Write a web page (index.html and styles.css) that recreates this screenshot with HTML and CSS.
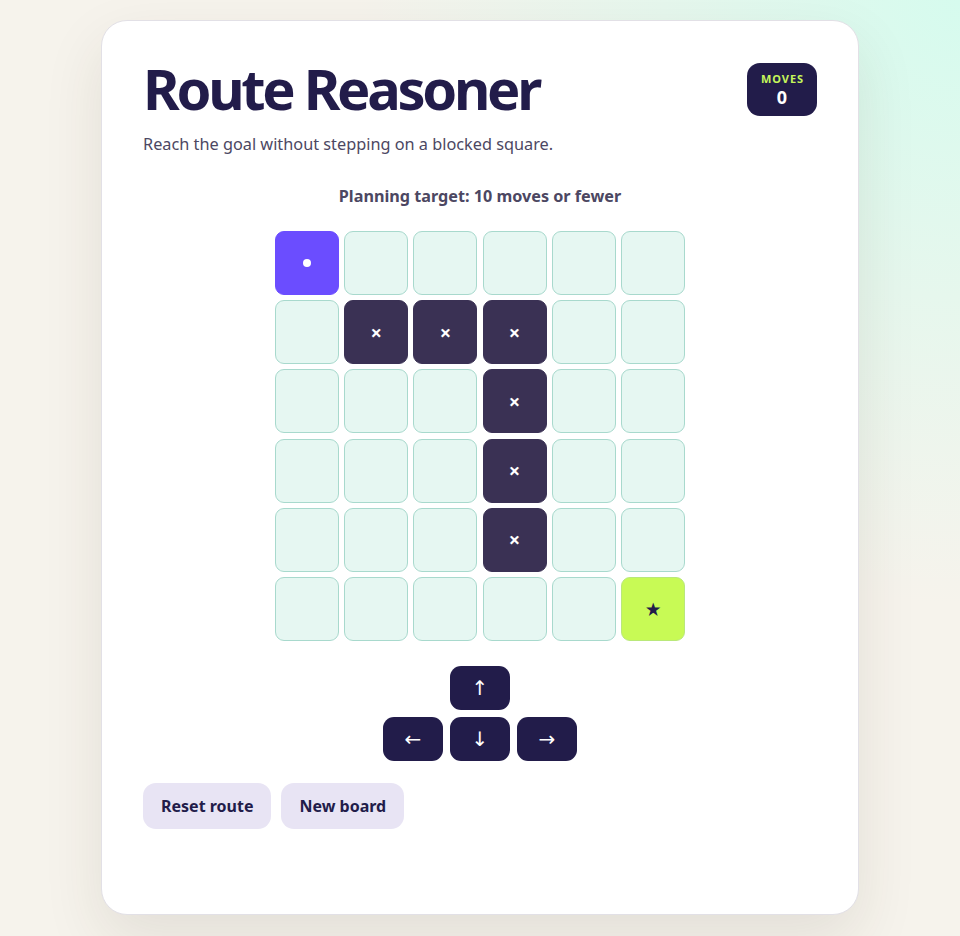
FILE: index.html
```html
<!DOCTYPE html>
<html lang="en">
<head>
<meta charset="utf-8">
<title>Route Reasoner</title>
<link rel="stylesheet" href="styles.css">
</head>
<body>
<main class="card">
  <header class="head">
    <div class="titles">
      <h1 class="title">Route Reasoner</h1>
      <p class="sub">Reach the goal without stepping on a blocked square.</p>
    </div>
    <div class="badge">
      <span class="badge-label">MOVES</span>
      <span class="badge-num">0</span>
    </div>
  </header>
  <p class="target">Planning target: 10 moves or fewer</p>
  <div class="grid">
    <div class="cell player"><span class="dot"></span></div>
    <div class="cell"></div><div class="cell"></div><div class="cell"></div><div class="cell"></div><div class="cell"></div>
    <div class="cell"></div><div class="cell block">×</div><div class="cell block">×</div><div class="cell block">×</div><div class="cell"></div><div class="cell"></div>
    <div class="cell"></div><div class="cell"></div><div class="cell"></div><div class="cell block">×</div><div class="cell"></div><div class="cell"></div>
    <div class="cell"></div><div class="cell"></div><div class="cell"></div><div class="cell block">×</div><div class="cell"></div><div class="cell"></div>
    <div class="cell"></div><div class="cell"></div><div class="cell"></div><div class="cell block">×</div><div class="cell"></div><div class="cell"></div>
    <div class="cell"></div><div class="cell"></div><div class="cell"></div><div class="cell"></div><div class="cell"></div><div class="cell goal">★</div>
  </div>
  <div class="pad">
    <button class="key k-up">↑</button>
    <button class="key k-left">←</button>
    <button class="key k-down">↓</button>
    <button class="key k-right">→</button>
  </div>
  <div class="actions">
    <button class="act">Reset route</button>
    <button class="act">New board</button>
  </div>
</main>
</body>
</html>
```

FILE: styles.css
```css
* { box-sizing: border-box; }
html, body { height: 100%; }
body {
  margin: 0;
  font-family: "Noto Sans", "Open Sans", sans-serif;
  color: #221c4a;
  background:
    radial-gradient(circle at 100% 0%, #d6fbee 0%, rgba(214,251,238,0.5) 22%, rgba(246,243,236,0) 45%),
    #f6f3ec;
  padding-top: 20px;
}
.card {
  width: 758px;
  height: 895px;
  margin: 0 auto;
  background: #fff;
  border: 1px solid #e2e0e6;
  border-radius: 26px;
  padding: 36px 41px 40px;
  box-shadow: 0 24px 60px rgba(60, 50, 30, 0.10);
}
.head {
  display: flex;
  justify-content: space-between;
  align-items: flex-start;
}
.title {
  margin: 0;
  font-size: 56px;
  line-height: 62px;
  font-weight: 700;
  letter-spacing: -3.3px;
  color: #221c4a;
}
.sub {
  margin: 14px 0 0;
  font-size: 16.3px;
  color: #4c4762;
}
.badge {
  margin-top: 6px;
  width: 70px;
  height: 53px;
  border-radius: 13px;
  background: #221c4a;
  display: flex;
  flex-direction: column;
  align-items: center;
  justify-content: center;
  gap: 1px;
}
.badge-label {
  font-size: 11px;
  font-weight: 700;
  color: #c6f65a;
  letter-spacing: 0.9px;
  line-height: 14px;
  padding-left: 1px;
}
.badge-num {
  font-size: 18px;
  font-weight: 700;
  color: #fff;
  line-height: 20px;
}
.target {
  margin: 30px 0 0;
  text-align: center;
  font-size: 16.2px;
  font-weight: 700;
  color: #4c4762;
}
.grid {
  margin: 24px auto 0;
  width: 410px;
  display: grid;
  grid-template-columns: repeat(6, 1fr);
  gap: 5.2px;
}
.cell {
  height: 64px;
  border-radius: 9px;
  background: #e6f7f2;
  border: 1px solid #a8d9cd;
  display: flex;
  align-items: center;
  justify-content: center;
  font-size: 14px;
  font-weight: 700;
}
.player { background: #6b4dff; border-color: #6b4dff; }
.dot { width: 8px; height: 8px; border-radius: 50%; background: #fff; }
.block { background: #3a3154; border-color: #3a3154; color: #fff; font-size: 20px; font-weight: 700; }
.goal { background: #c8fa55; border-color: #b9e87a; color: #221c4a; font-size: 16px; }
.pad {
  margin: 25px auto 0;
  width: 194px;
  display: grid;
  grid-template-columns: repeat(3, 60px);
  grid-template-rows: 44px 44px;
  gap: 7px;
}
.key {
  border: 0;
  border-radius: 11px;
  background: #221c4a;
  color: #fff;
  font-family: "Noto Sans", "DejaVu Sans", sans-serif;
  font-size: 20px;
  padding: 0;
}
.k-up { grid-column: 2; grid-row: 1; }
.k-left { grid-column: 1; grid-row: 2; }
.k-down { grid-column: 2; grid-row: 2; }
.k-right { grid-column: 3; grid-row: 2; }
.actions {
  margin-top: 22px;
  display: flex;
  gap: 10px;
}
.act {
  height: 46px;
  border: 0;
  border-radius: 13px;
  background: #e8e4f4;
  color: #221c4a;
  font-family: "Noto Sans", "Open Sans", sans-serif;
  font-size: 16px;
  font-weight: 700;
  padding: 0 18px;
}
```
